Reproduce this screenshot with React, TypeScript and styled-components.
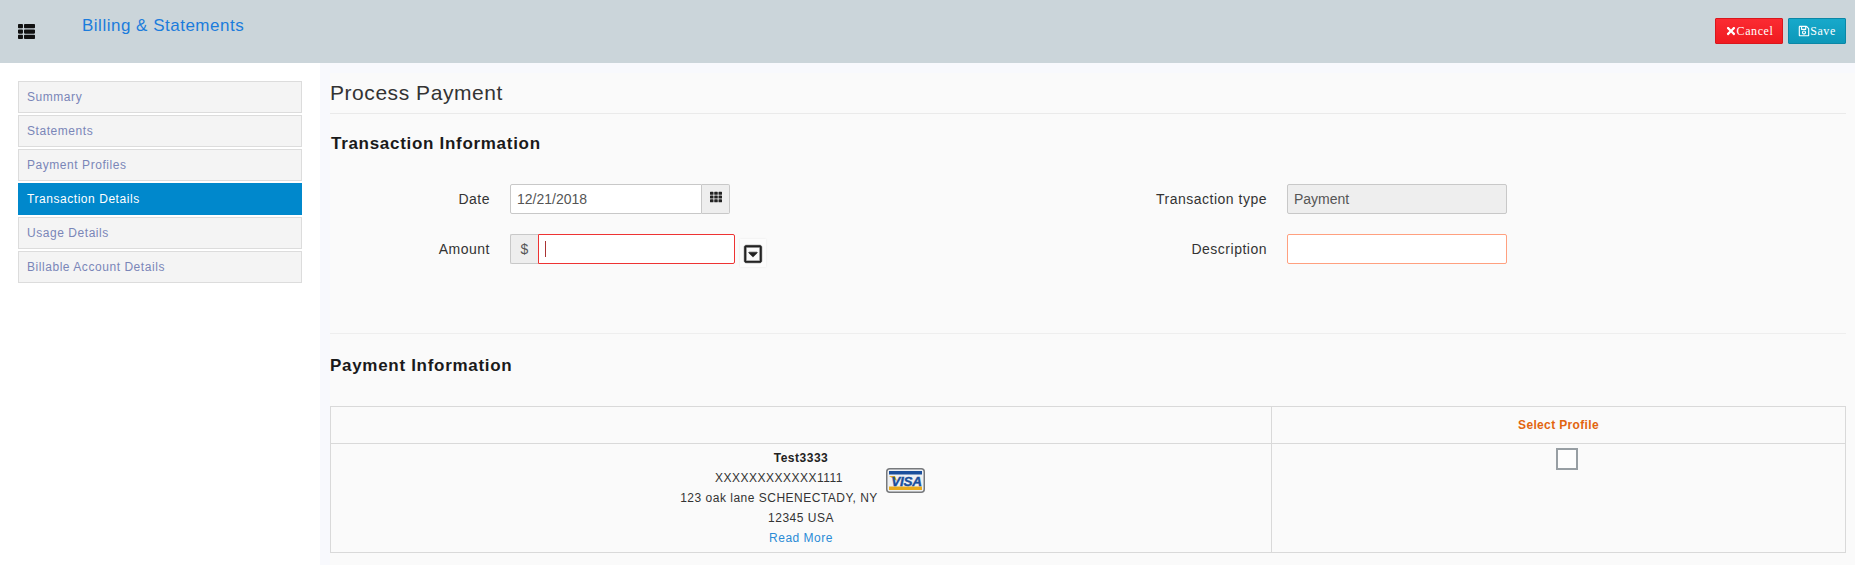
import React from 'react';
import styled, { createGlobalStyle } from 'styled-components';
import { FaThList, FaTh, FaTimes, FaRegSave, FaRegCaretSquareDown } from 'react-icons/fa';

const GlobalStyle = createGlobalStyle`
     html, body {
          margin: 0;
          padding: 0;
          height: 100%;
          background: #fff;
          font-family: 'Liberation Sans', Arial, sans-serif;
     }
     * {
          box-sizing: border-box;
     }
`;

const Page = styled.div`
     width: 1855px;
     height: 565px;
     display: flex;
     flex-direction: column;
     overflow: hidden;
`;

const Header = styled.header`
     height: 63px;
     flex: none;
     display: flex;
     background: #cbd5da;
     padding-left: 18px;
     padding-right: 9px;
`;

const MenuIcon = styled(FaThList)`
     width: 17px;
     height: 17px;
     margin-top: 23px;
     color: #111;
`;

const PageName = styled.div`
     margin: 15px 0 0 47px;
     font-size: 17px;
     line-height: 21px;
     letter-spacing: 0.5px;
     color: #1b7cdc;
`;

const Actions = styled.div`
     margin-left: auto;
     padding-top: 18px;
     display: flex;
     gap: 5px;
     align-items: flex-start;
`;

const ActionButton = styled.button<{ $tone: 'red' | 'blue'; $width: number }>`
     width: ${(props) => props.$width}px;
     height: 26px;
     padding: 0;
     display: flex;
     align-items: center;
     justify-content: center;
     gap: 0;
     border: 1px solid ${(props) => (props.$tone === 'red' ? '#d9161c' : '#0b87a6')};
     border-radius: 1px;
     background: ${(props) =>
          props.$tone === 'red'
               ? 'linear-gradient(#fb2b32, #f01a20)'
               : 'linear-gradient(#17a9cb, #0d98b9)'};
     color: #fff;
     font-family: 'Liberation Serif', serif;
     font-size: 12px;
     letter-spacing: 0.6px;

     svg {
          width: 12px;
          height: 12px;
     }
`;

const Body = styled.div`
     flex: 1;
     display: flex;
     min-height: 0;
`;

const Sidebar = styled.nav`
     width: 320px;
     flex: none;
     padding: 18px 18px 0;
     display: flex;
     flex-direction: column;
     gap: 2px;
     background: #fff;
`;

const SideItem = styled.div<{ $active?: boolean }>`
     height: 32px;
     padding-left: 8px;
     display: flex;
     align-items: center;
     border: 1px solid ${(props) => (props.$active ? '#0088cc' : '#dcdcdc')};
     background: ${(props) => (props.$active ? '#0088cc' : '#f4f4f4')};
     color: ${(props) => (props.$active ? '#fff' : '#7a86b8')};
     font-size: 12px;
     letter-spacing: 0.55px;
`;

const Main = styled.main`
     flex: 1;
     padding: 10px 0 0 10px;
     background: #f8f9fd;
`;

const Content = styled.div`
     height: 100%;
     padding-right: 10px;
     background: #fafafa;
`;

const Title = styled.h1`
     margin: 0;
     height: 41px;
     padding-top: 9px;
     border-bottom: 1px solid #eaeaea;
     font-size: 21px;
     line-height: 22px;
     font-weight: 400;
     letter-spacing: 0.55px;
     color: #333;
`;

const SectionTitle = styled.h2`
     margin: 0;
     font-size: 17px;
     line-height: 20px;
     font-weight: 700;
     letter-spacing: 0.7px;
     color: #1a1a1a;
`;

const TransactionTitle = styled(SectionTitle)`
     padding: 20px 0 0 1px;
`;

const FormGrid = styled.div`
     margin-top: 30px;
     display: grid;
     grid-template-columns: 607px 1fr;
     row-gap: 20px;
     padding-bottom: 69px;
     border-bottom: 1px solid #eeeeee;
`;

const Field = styled.div<{ $labelWidth: number }>`
     display: grid;
     grid-template-columns: ${(props) => props.$labelWidth}px auto;
     column-gap: 20px;
     justify-content: start;
     align-items: center;
`;

const FieldLabel = styled.label`
     text-align: right;
     font-size: 14px;
     letter-spacing: 0.5px;
     color: #333;
`;

const InputRow = styled.div`
     position: relative;
     display: flex;
     align-items: flex-start;
`;

const TextInput = styled.input<{
     $width: number;
     $status?: 'error' | 'warning';
     $joined?: 'left' | 'right';
}>`
     width: ${(props) => props.$width}px;
     height: 30px;
     padding: 0 6px;
     outline: none;
     background: ${(props) => (props.disabled ? '#eeeeee' : '#fff')};
     border: 1px solid
          ${(props) =>
               props.$status === 'error'
                    ? '#ee3333'
                    : props.$status === 'warning'
                      ? '#ffa07f'
                      : '#c8c8c8'};
     border-radius: ${(props) =>
          props.$joined === 'left'
               ? '0 2px 2px 0'
               : props.$joined === 'right'
                 ? '2px 0 0 2px'
                 : '2px'};
     font-family: 'Liberation Sans', Arial, sans-serif;
     font-size: 14px;
     color: #555;
     -webkit-text-fill-color: #555;
     opacity: 1;
`;

const Addon = styled.span<{ $side: 'left' | 'right'; $width: number }>`
     width: ${(props) => props.$width}px;
     height: 30px;
     display: flex;
     align-items: center;
     justify-content: center;
     background: #eeeeee;
     border: 1px solid #c8c8c8;
     ${(props) =>
          props.$side === 'left'
               ? 'border-right: 0; border-radius: 2px 0 0 2px;'
               : 'border-left: 0; border-radius: 0 2px 2px 0;'}
     font-size: 14px;
     color: #555;

     svg {
          width: 12px;
          height: 12px;
          margin-top: -4px;
          color: #222;
     }
`;

const TextCaret = styled.span`
     position: absolute;
     left: 35px;
     top: 7px;
     width: 1px;
     height: 16px;
     background: #a33;
`;

const PickerButton = styled.span`
     width: 26px;
     height: 28px;
     margin: 5px 0 -3px 5px;
     padding-top: 2px;
     display: flex;
     align-items: center;
     justify-content: center;
     background: #fcfcfc;
     box-shadow: 0 0 2px rgba(0, 0, 0, 0.08);

     svg {
          width: 20px;
          height: 20px;
          color: #222;
          stroke: #222;
          stroke-width: 14;
     }
`;

const PaymentSection = styled.section`
     padding-top: 22px;
`;

const ProfileTable = styled.table`
     width: 1516px;
     margin-top: 30px;
     table-layout: fixed;
     border-collapse: collapse;
     font-size: 12px;
     letter-spacing: 0.5px;
     color: #333;

     td,
     th {
          border: 1px solid #d9d9d9;
          padding: 0;
     }
`;

const ProfileColumn = styled.col`
     width: 941px;
`;

const HeadCell = styled.th`
     height: 37px;
     font-size: 12px;
     font-weight: 700;
     letter-spacing: 0.35px;
     color: #e2640f;
`;

const ProfileCell = styled.td`
     height: 109px;
     vertical-align: top;
`;

const SelectCell = styled.td`
     vertical-align: top;
`;

const ProfileCard = styled.div`
     width: 247px;
     margin: 0 auto;
     padding-top: 4px;
     text-align: center;
     line-height: 20px;
`;

const CardLogo = styled.svg`
     float: right;
     width: 39px;
     height: 25px;
     margin-left: 5px;
`;

const ProfileName = styled.div`
     font-weight: 700;
     color: #222;
`;

const ReadMore = styled.a`
     color: #2a8bd6;
     text-decoration: none;
`;

const SelectBox = styled.span`
     display: block;
     width: 22px;
     height: 22px;
     margin: 4px 0 0 284px;
     border: 2px solid #979ea3;
     background: #fdfdfd;
`;

const navItems = [
     'Summary',
     'Statements',
     'Payment Profiles',
     'Transaction Details',
     'Usage Details',
     'Billable Account Details'
];

const VisaLogo = () => (
     <CardLogo viewBox="0 0 39 25" role="img" aria-label="Visa">
          <rect x="0.75" y="0.75" width="37.5" height="23.5" rx="3" fill="#eef0f3" stroke="#77797c" strokeWidth="1.5" />
          <rect x="3" y="3" width="33" height="3.5" fill="#1b4f9c" />
          <rect x="3" y="18.5" width="33" height="3.5" fill="#e9ab1c" />
          <path d="M3 8h6l2 5z" fill="#e9ab1c" />
          <text
               x="20.5"
               y="17.5"
               textAnchor="middle"
               fontFamily="'Liberation Sans', Arial, sans-serif"
               fontSize="13.5"
               fontWeight="700"
               fontStyle="italic"
               letterSpacing="-0.3"
               fill="#1b4f9c"
               stroke="#1b4f9c"
               strokeWidth="0.4"
          >
               VISA
          </text>
     </CardLogo>
);

export default function App() {
     return (
          <Page>
               <GlobalStyle />
               <Header>
                    <MenuIcon />
                    <PageName>Billing &amp; Statements</PageName>
                    <Actions>
                         <ActionButton $tone="red" $width={68}>
                              <FaTimes />
                              Cancel
                         </ActionButton>
                         <ActionButton $tone="blue" $width={58}>
                              <FaRegSave />
                              Save
                         </ActionButton>
                    </Actions>
               </Header>
               <Body>
                    <Sidebar>
                         {navItems.map((item) => (
                              <SideItem key={item} $active={item === 'Transaction Details'}>
                                   {item}
                              </SideItem>
                         ))}
                    </Sidebar>
                    <Main>
                         <Content>
                              <Title>Process Payment</Title>
                              <TransactionTitle>Transaction Information</TransactionTitle>
                              <FormGrid>
                                   <Field $labelWidth={160}>
                                        <FieldLabel>Date</FieldLabel>
                                        <InputRow>
                                             <TextInput $width={192} $joined="right" defaultValue="12/21/2018" />
                                             <Addon $side="right" $width={28}>
                                                  <FaTh />
                                             </Addon>
                                        </InputRow>
                                   </Field>
                                   <Field $labelWidth={330}>
                                        <FieldLabel>Transaction type</FieldLabel>
                                        <TextInput $width={220} disabled defaultValue="Payment" />
                                   </Field>
                                   <Field $labelWidth={160}>
                                        <FieldLabel>Amount</FieldLabel>
                                        <InputRow>
                                             <Addon $side="left" $width={28}>$</Addon>
                                             <TextInput $width={197} $joined="left" $status="error" />
                                             <TextCaret />
                                             <PickerButton>
                                                  <FaRegCaretSquareDown />
                                             </PickerButton>
                                        </InputRow>
                                   </Field>
                                   <Field $labelWidth={330}>
                                        <FieldLabel>Description</FieldLabel>
                                        <TextInput $width={220} $status="warning" />
                                   </Field>
                              </FormGrid>
                              <PaymentSection>
                                   <SectionTitle>Payment Information</SectionTitle>
                                   <ProfileTable>
                                        <colgroup>
                                             <ProfileColumn />
                                             <col />
                                        </colgroup>
                                        <thead>
                                             <tr>
                                                  <HeadCell />
                                                  <HeadCell>Select Profile</HeadCell>
                                             </tr>
                                        </thead>
                                        <tbody>
                                             <tr>
                                                  <ProfileCell>
                                                       <ProfileCard>
                                                            <ProfileName>Test3333</ProfileName>
                                                            <VisaLogo />
                                                            XXXXXXXXXXXX1111
                                                            <br />
                                                            123 oak lane SCHENECTADY, NY
                                                            <br />
                                                            12345 USA
                                                            <br />
                                                            <ReadMore href="#">Read More</ReadMore>
                                                       </ProfileCard>
                                                  </ProfileCell>
                                                  <SelectCell>
                                                       <SelectBox />
                                                  </SelectCell>
                                             </tr>
                                        </tbody>
                                   </ProfileTable>
                              </PaymentSection>
                         </Content>
                    </Main>
               </Body>
          </Page>
     );
}
